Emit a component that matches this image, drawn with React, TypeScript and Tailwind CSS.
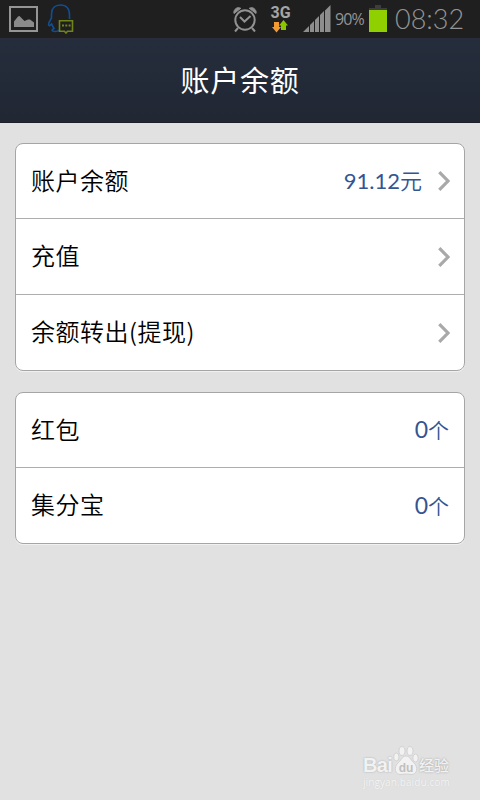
import React from "react";

const cjk = "font-['Noto_Sans_CJK_SC',sans-serif]";
const latin = "font-['Lato','Liberation_Sans',sans-serif]";

function Chevron() {
  return (
    <svg className="ml-4 block h-5 w-3 shrink-0" viewBox="0 0 12 20" fill="none" stroke="#a9a9a9" strokeWidth="3.2">
      <path d="M1.300 1.200 10 10 1.300 18.800" />
    </svg>
  );
}

type RowProps = { label: React.ReactNode; value?: React.ReactNode; arrow?: boolean; tall?: boolean };

function Row({ label, value, arrow, tall }: RowProps) {
  return (
    <div className={`flex items-center pl-[15px] ${arrow ? "pr-[14px]" : "pr-[15px]"} ${tall ? "h-[76px]" : "h-[75px]"}`}>
      <div className="flex-1 pb-[3px] text-2xl leading-[30px] font-[350] tracking-[0.5px] whitespace-nowrap text-black">{label}</div>
      {value && <div className="flex items-baseline pb-[2px] leading-[30px] font-[350] whitespace-nowrap text-[#35558f]">{value}</div>}
      {arrow && <Chevron />}
    </div>
  );
}

function Card({ children }: { children: React.ReactNode }) {
  return (
    <section className="divide-y divide-[#adadad] rounded-lg border border-[#a5a5a5] bg-white shadow-[0_1px_0_#f1f1f1]">
      {children}
    </section>
  );
}

function StatusBar() {
  return (
    <header className={`flex h-[38px] items-start bg-[#1f1f1f] text-[#949494] ${latin}`}>
      <svg className="mt-[6px] ml-[9px] block shrink-0" width="29" height="26" viewBox="0 0 29 26">
        <rect x="1" y="1" width="27" height="24" fill="none" stroke="#959595" strokeWidth="2" />
        <path d="M5 21V15.500l4-5 1.500-.5 5 5 3.500-1.500 2 0 4 3V21Z" fill="#8a8a8a" />
      </svg>
      <svg className="mt-[3px] ml-[9px] block shrink-0" width="29" height="32" viewBox="0 0 29 32" fill="none">
        <path d="M22.500 16v-4C22.500 5.500 19 2 13.500 2 8 2 4.500 5.500 4.500 11v4L2 19.500c-1 3 0 4.500 2.500 1.500l2.500 4.500c-3 1.500-2.500 3 1 3 2.500 0 3.500-.5 4.500-1.500" stroke="#134e91" strokeWidth="1.600" />
        <path d="M12.500 17.700h13v10.600h-5L19 30l-1.600-1.700h-4.900Z" stroke="#71841b" strokeWidth="1.600" fill="#1f1f1f" />
        <path d="M15 22.500h2m1.300 0h2m1.300 0h2" stroke="#71841b" strokeWidth="1.800" />
      </svg>
      <svg className="mt-[5px] ml-[156px] block shrink-0" width="26" height="28" viewBox="0 0 26 28" fill="none" stroke="#919191">
        <circle cx="13" cy="15" r="9.700" strokeWidth="2" />
        <path d="m8 12 4.500 4.500 6-5.500" strokeWidth="2" />
        <path d="M2 8.500C1 4.500 5.500 1.200 8.800 3.300Z" fill="#919191" strokeWidth="1" />
        <path d="M24 8.500c1-4-3.500-7.300-6.800-5.200Z" fill="#919191" strokeWidth="1" />
        <path d="m6 23-3 3.500M20 23l3 3.500" strokeWidth="2" />
      </svg>
      <div className="mt-[6px] ml-[12px] w-[22px] shrink-0">
        <div className="h-[14px] w-[21px] text-center font-['Roboto','Liberation_Sans',sans-serif] text-[16px] leading-[14px] font-bold text-[#a5a5a5]">3G</div>
        <svg className="block" width="22" height="13" viewBox="0 0 22 13">
          <path d="M4 2h5v5h2l-4.500 5.500L2 7h2Z" fill="#f59a32" />
          <path d="M11 10V5.500H9L13.500 0l4.500 5.500h-2V10Z" fill="#8cc500" />
        </svg>
      </div>
      <svg className="mt-[5px] ml-[11px] block shrink-0" width="28" height="27" viewBox="0 0 28 27" fill="#8d8d8d">
        <path d="M0 27 6 21V27ZM7 20l4-4V27H7ZM12 15l4-4V27h-4ZM17 10l4-4V27h-4ZM22 5.500 27.500 0V27H22Z" />
      </svg>
      <div className="mt-[8px] ml-[4px] w-[34px] shrink-0 font-['Open_Sans',sans-serif] text-[16px] leading-[22px] font-normal tracking-[-0.9px] whitespace-nowrap">90%</div>
      <div className="mt-[5px] flex w-[18px] shrink-0 flex-col items-center">
        <div className="h-[3px] w-[6px] bg-[#3d3d3d]" />
        <div className="h-[2px] w-[18px] bg-[#3d3d3d]" />
        <div className="h-[22px] w-[18px] bg-[#91d000]" />
      </div>
      <div className="mt-[3px] ml-[8px] w-[75px] text-[27px] leading-[32px] font-[350] tracking-[0px] whitespace-nowrap">08:32</div>
    </header>
  );
}

function Watermark() {
  return (
    <div className="absolute top-[745px] left-[363px] w-[96px] text-[#f2f2f2]">
      <div className="flex h-[31px] items-end">
        <span className="w-[30px] shrink-0 font-['Liberation_Sans',sans-serif] text-[20px] leading-[21px] font-bold tracking-[-0.6px] [text-shadow:0_0_2px_#a8a8a8]">Bai</span>
        <svg className="block shrink-0" width="26" height="31" viewBox="0 0 26 31">
          <g fill="#f2f2f2" stroke="#cccccc" strokeWidth=".8">
            <ellipse cx="9" cy="6" rx="3" ry="4.400" />
            <ellipse cx="17" cy="6" rx="3" ry="4.400" />
            <ellipse cx="3.300" cy="12" rx="2.700" ry="4" />
            <ellipse cx="22.500" cy="13" rx="2.700" ry="4" />
            <path d="M13 11c-3.500 0-4 3-7.500 6.500C0 22 2 30 8 29.500c3-.6 7-.6 10 0 6 .5 8-7.500 2.500-12C17 14 16.500 11 13 11Z" />
          </g>
          <text x="13" y="26.500" textAnchor="middle" fill="#c0c0c0" fontFamily="Liberation Sans" fontSize="12" fontWeight="bold">du</text>
        </svg>
        <span className={`mb-[1px] text-[15px] leading-[21px] font-medium whitespace-nowrap [text-shadow:0_0_2px_#999999] ${cjk}`}>经验</span>
      </div>
      <div className="font-['Open_Sans',sans-serif] text-[10px] leading-[12px] tracking-[0.1px] whitespace-nowrap text-[#f5f5f5] [text-shadow:0_0_1px_#c8c8c8]">jingyan.baidu.com</div>
    </div>
  );
}

export default function App() {
  const count = (
    <>
      <span className={`text-[23px] font-normal ${latin}`}>0</span>
      <span className="text-[21px]">个</span>
    </>
  );
  return (
    <div className={`relative h-[800px] w-[480px] overflow-hidden bg-[#e1e1e1] ${cjk}`}>
      <StatusBar />
      <div className="flex h-[85px] items-center justify-center border-t-2 border-b border-t-[#292c3a] border-b-[#1b202b] bg-linear-to-b from-[#252d3c] to-[#212733]">
        <h1 className="pb-[4px] text-[29px] leading-[40px] font-normal tracking-[0.8px] text-white">账户余额</h1>
      </div>
      <main className="flex flex-col gap-[21px] px-[15px] pt-5">
        <Card>
          <Row
            label="账户余额"
            value={
              <>
                <span className={`text-[22px] font-normal ${latin}`}>91.12</span>
                <span className="text-[22px]">元</span>
              </>
            }
            arrow
          />
          <Row label="充值" arrow tall />
          <Row label="余额转出(提现)" arrow />
        </Card>
        <Card>
          <Row label="红包" value={count} />
          <Row label="集分宝" value={count} />
        </Card>
      </main>
      <Watermark />
    </div>
  );
}
